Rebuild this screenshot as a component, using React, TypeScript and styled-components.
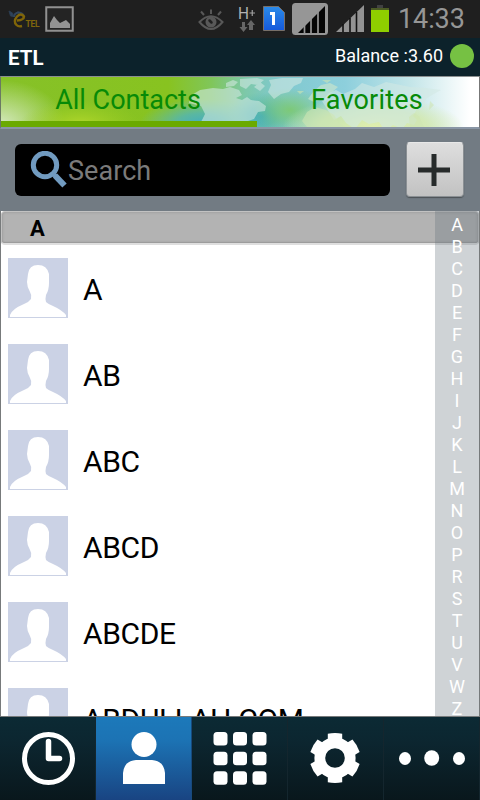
import React from "react";
import styled, { createGlobalStyle } from "styled-components";

const GlobalStyle = createGlobalStyle`
  * { box-sizing: border-box; }
  body { margin: 0; background: #000; font-family: Roboto, "Noto Sans", sans-serif; }
  svg { display: block; flex: none; }
`;

const Screen = styled.div`
  width: 480px;
  height: 800px;
  display: flex;
  flex-direction: column;
  overflow: hidden;
  background: #fff;
`;

const StatusBar = styled.header`
  flex: none;
  height: 38px;
  display: flex;
  background: #1f1f1f;
`;

const Clock = styled.time`
  margin-left: 7px;
  font-size: 27px;
  line-height: 38px;
  letter-spacing: -0.1px;
  color: #969696;
`;

const TitleBar = styled.div`
  flex: none;
  height: 38px;
  padding: 0 6px 0 8px;
  display: flex;
  align-items: center;
  justify-content: space-between;
  background: #0c222b;
  color: #fff;
`;

const Title = styled.h1`
  margin: 1px 0 0;
  font-size: 20.5px;
  line-height: 24px;
  font-weight: 700;
`;

const Balance = styled.div`
  display: flex;
  align-items: center;
  gap: 7px;
  padding-bottom: 2px;
  font-size: 18px;
  line-height: 24px;
`;

const OnlineDot = styled.span`
  width: 24px;
  height: 24px;
  border-radius: 50%;
  background: #76c143;
`;

const TabBar = styled.nav`
  flex: none;
  position: relative;
  height: 53px;
  display: flex;
  border-top: 1px solid #8b8f90;
  border-bottom: 2px solid #8996a5;
  border-left: 1px solid #6a7962;
  border-right: 1px solid #777;
`;

const TabArt = styled.svg`
  position: absolute;
  inset: 0;
`;

const Tab = styled.button<{ $active?: boolean }>`
  position: relative;
  width: ${(p) => (p.$active ? 256 : 222)}px;
  height: 50px;
  padding: 3px 2px 0 0;
  border: 0;
  border-bottom: 6px solid ${(p) => (p.$active ? "#6aaa00" : "transparent")};
  background: none;
  font: 27px/41px Roboto, sans-serif;
  letter-spacing: ${(p) => (p.$active ? 0 : 0.2)}px;
  color: #078a07;
`;

const SearchRow = styled.div`
  flex: none;
  height: 82px;
  padding: 13px 16px 0 15px;
  display: flex;
  justify-content: space-between;
  background: #727b83;
`;

const SearchBox = styled.div`
  width: 375px;
  height: 52px;
  margin-top: 2px;
  padding: 2px 0 0 15px;
  display: flex;
  align-items: center;
  border-radius: 6px;
  background: #000;
  color: #7b7b7b;
  font-size: 27px;
  letter-spacing: 0.05px;
`;

const AddButton = styled.button`
  width: 58px;
  height: 55px;
  padding: 0 2px 0 0;
  display: grid;
  place-items: center;
  border: 1px solid #8b9094;
  border-top-color: #e8e8e8;
  border-radius: 4px;
  background: linear-gradient(#dedede, #c2c2c2);
  box-shadow: 0 1px 1px #4d5357;
`;

const ListArea = styled.main`
  position: relative;
  flex: none;
  height: 506px;
  overflow: hidden;
  border: solid #777a7b;
  border-width: 0 1px 1px;
  background: #fff;
`;

const SectionHeader = styled.h2`
  margin: 0;
  height: 34px;
  padding-left: 28px;
  border: 1px solid #c2c2c2;
  border-bottom: 2px solid #dedede;
  border-radius: 4px;
  background: #b3b3b3;
  box-shadow: inset 0 0 3px #929292, inset 0 -1px 1px #a0a0a0;
  font-size: 22px;
  line-height: 33px;
  font-weight: 700;
  color: #000;
`;

const Contact = styled.div`
  height: 86px;
  padding: 13px 0 0 7px;
  display: flex;
  gap: 15px;
  font-size: 30px;
  line-height: 64px;
  letter-spacing: -0.35px;
  color: #000;
`;

const AlphaIndex = styled.aside`
  position: absolute;
  top: 0;
  right: 0;
  width: 44px;
  height: 506px;
  padding-top: 3px;
  display: flex;
  flex-direction: column;
  background: rgba(95, 108, 118, 0.3);
`;

const Letter = styled.span`
  flex: none;
  height: 22px;
  font-size: 18px;
  line-height: 22px;
  text-align: center;
  color: #fff;
`;

const BottomNav = styled.nav`
  flex: none;
  height: 83px;
  display: grid;
  grid-template-columns: repeat(5, 96px);
`;

const NavItem = styled.button<{ $active?: boolean }>`
  padding: 0;
  border: 0;
  border-right: 1px solid ${(p) => (p.$active ? "#184a7c" : "#14262e")};
  background: ${(p) =>
    p.$active
      ? "linear-gradient(#1c79ba 0%, #1c73b4 28%, #194482 100%)"
      : "linear-gradient(#0c2a34 0%, #0c2630 30%, #09171c 100%)"};
`;

const StatusIcons = () => (
  <svg width="391" height="38" viewBox="0 0 391 38">
    <path d="M9 11l3.500 2 1 3.500-3-.5z" fill="#2f435a" stroke="#2b3d51" />
    <path d="M17 12.500q5-.500 7 3.500M14 17q0-4 5-4.500" fill="none" stroke="#31455b" strokeWidth="2" />
    <path d="M17 20.500q7-.5 7-4q-3-4-7 0q-4 5-.5 8.500q2 2 5.500 1" fill="none" stroke="#806508" strokeWidth="2.400" />
    <text x="25.500" y="27" fontFamily="Roboto, sans-serif" fontSize="8.500" fontWeight="700" textLength="14" fill="#80650c">TEL</text>
    <rect x="46.250" y="7.250" width="26.500" height="23.500" fill="#242424" stroke="#919191" strokeWidth="2" />
    <path d="M50 28v-5l4-7 3 4 3 3 6-3 4 4v4z" fill="#939393" />
    <g fill="none" stroke="#585858" strokeWidth="2">
      <path d="M199.500 22q11.500-11.500 23 0q-11.500 14-23 0z" />
      <path d="M211 14V9.500M204 15l-3-3.500M218 15l3-3.500" />
    </g>
    <circle cx="211" cy="22" r="5.500" fill="#585858" />
    <path d="M209.500 20.500l2 2" stroke="#202020" strokeWidth="2.500" strokeLinecap="round" />
    <text x="238" y="19" fontFamily="Roboto, sans-serif" fontSize="17" textLength="11" lengthAdjust="spacingAndGlyphs" fill="#b2b2b2">H</text>
    <path d="M249.500 13h5.500M252.250 10v6" stroke="#a0a0a0" strokeWidth="1.200" />
    <path d="M242 22h3v5h2.500l-4 5-4-5h2.500zM249 30v-5h-2l4-5 4 5h-2v5z" fill="#666" />
    <path d="M263.500 6.500h15l6 6v18h-21z" fill="url(#sim)" stroke="#776f68" />
    <path d="M270 13.500h3.500V25" fill="none" stroke="#fff" strokeWidth="3" />
    <rect x="292" y="3" width="36" height="32" rx="3.500" fill="#969696" />
    <path d="M298 33l27-27v27z" fill="#050505" />
    <path d="M304.500 25v8M311 18v15M318 12v21" stroke="#969696" strokeWidth="1.700" />
    <path d="M336 32l28-27v27z" fill="#939393" />
    <path d="M343 24v8M350 18v14M356.500 12v20" stroke="#111" strokeWidth="1.600" />
    <path d="M377 5h6v3h-6z" fill="#414141" />
    <rect x="371" y="8" width="18" height="24" fill="#8fce00" />
    <path d="M371 8h18v2h-18z" fill="#4c5b25" />
    <defs>
      <linearGradient id="sim" x2="0" y2="1"><stop stopColor="#2b8be8" /><stop offset="1" stopColor="#1559db" /></linearGradient>
    </defs>
  </svg>
);

const WorldMap = () => (
  <TabArt width="478" height="50" viewBox="1 77 478 50" preserveAspectRatio="none">
    <defs>
      <linearGradient id="band">
        <stop stopColor="#86c128" /><stop offset=".35" stopColor="#88c320" />
        <stop offset=".44" stopColor="#80c65a" /><stop offset=".51" stopColor="#7dc8a8" />
        <stop offset=".58" stopColor="#80c9ce" /><stop offset=".72" stopColor="#8dcfdc" />
        <stop offset=".86" stopColor="#c5e6e9" /><stop offset=".98" stopColor="#fff" />
      </linearGradient>
      <radialGradient id="pale"><stop stopColor="#d4e9bd" /><stop offset="1" stopColor="#d4e9bd" stopOpacity="0" /></radialGradient>
      <radialGradient id="lime"><stop stopColor="#b0d62b" /><stop offset="1" stopColor="#9cce20" stopOpacity="0" /></radialGradient>
      <radialGradient id="sea"><stop stopColor="#45aebc" /><stop offset=".4" stopColor="#53b5b1" stopOpacity=".85" /><stop offset="1" stopColor="#63bdb1" stopOpacity="0" /></radialGradient>
      <radialGradient id="glow"><stop stopColor="#e1efad" /><stop offset=".6" stopColor="#d4e9a9" stopOpacity=".8" /><stop offset="1" stopColor="#d4e9a9" stopOpacity="0" /></radialGradient>
      <radialGradient id="leaf"><stop stopColor="#7dc978" /><stop offset="1" stopColor="#7dc978" stopOpacity="0" /></radialGradient>
    </defs>
    <rect x="1" y="77" width="478" height="50" fill="url(#band)" />
    <ellipse cx="0" cy="124" rx="65" ry="44" fill="url(#pale)" />
    <ellipse cx="80" cy="124" rx="60" ry="24" fill="url(#lime)" />
    <ellipse cx="202" cy="123" rx="62" ry="24" fill="url(#sea)" />
    <ellipse cx="262" cy="116" rx="35" ry="24" fill="url(#sea)" />
    <ellipse cx="290" cy="110" rx="38" ry="22" fill="url(#leaf)" />
    <ellipse cx="373" cy="128" rx="91" ry="32" fill="url(#glow)" />
    <g fill="#d2e9e3" fillOpacity=".58">
      <path d="M190 96l10-6 13-2 10 1 7-2 9 3 3 5-6 3 6 2 5-3 4 3 8 1 7 5-1 5-7 1-4 7-9 3-4 5h-43l4-7 3-6-4-8-12-3z" />
      <path d="M226 83l7-3 5 2-4 4-8 1zM240 79l17-1 7 2-6 5-7-1-5 5-6-3zM254 87l6-5 5 4-5 5z" />
      <path d="M269 80l13-2h21l-2 5-7 3-5 6-8 2-7 5-6-7 3-7z" />
      <path d="M308 99l5-7 8-7 9-2 8 4-8 7-4 7-6-1-6 2zM318 89l5 1-3 4z" fill="#d2e9cb" />
      <path d="M322 101l7-8 7-3 7 4 12-5 7-6 12 4 12-5 24 5 16 1 15 2-9 5-6 4-2 7-6 1-5 9 4 4-3 5-7-2-5 6-9-4-8 6-6-9-10 2-7-4-7 9-9-6-5-7-7 4z" />
      <path d="M307 112l8-5 11 3 8 5 5 8 5 4h-37l-5-6zM409 117l5-4 5 3 5 11h-14zM297 91h7l-4 3zM322 80h9l-4 3zM430 101l4 4-5 5z" fill="#cee6b4" />
    </g>
  </TabArt>
);

const SearchIcon = () => (
  <svg width="38" height="40" viewBox="0 0 38 40">
    <circle cx="15" cy="14" r="11.700" fill="none" stroke="#719bc0" strokeWidth="5" />
    <path d="M23 22.500l3 3" stroke="#719bc0" strokeWidth="4.500" />
    <path d="M25 24.500l9.500 10" stroke="#719bc0" strokeWidth="6" />
  </svg>
);

const Avatar = () => (
  <svg width="60" height="60" viewBox="0 0 60 60">
    <rect width="60" height="60" fill="#cbd2e5" />
    <path d="M2 59v-2q2-6 14-11 5-2 7-5 1-4-1-7-3-5-3-10l1-8q1-9 10-9t11 9v9q0 7-3 12-1 4 0 7 2 2 7 4 9 4 13 9v2z" fill="#fff" />
  </svg>
);

const gearTeeth = [0, 60, 120, 180, 240, 300];

const NavIcon = ({ kind }: { kind: string }) => (
  <svg width="95" height="83" viewBox="0 0 95 83" fill="#fff">
    {kind === "recent" && (
      <g fill="none" stroke="#fff">
        <circle cx="48.500" cy="41.500" r="24" strokeWidth="5" />
        <path d="M48.500 24.500v17h11" strokeWidth="5.500" strokeLinecap="round" strokeLinejoin="round" />
      </g>
    )}
    {kind === "contacts" && (
      <>
        <circle cx="48" cy="27.500" r="12.500" />
        <path d="M27 67V56q1-12 13-13h16q12 1 13 13v11z" />
      </>
    )}
    {kind === "keypad" &&
      [15, 34.7, 54.2].map((y) => [21.5, 41, 60.5].map((x) => <rect key={`${x}-${y}`} x={x} y={y} width="14" height="13.500" rx="3.500" />))}
    {kind === "settings" && (
      <g transform="translate(47 41)">
        {gearTeeth.map((angle) => (
          <path key={angle} transform={`rotate(${angle})`} d="M-7.200-17v-7.300q7.200-1.600 14.400 0v7.300z" />
        ))}
        <circle r="15.200" fill="none" stroke="#fff" strokeWidth="10.800" />
      </g>
    )}
    {kind === "more" && (
      <>
        <ellipse cx="21" cy="41.500" rx="6" ry="6.500" />
        <ellipse cx="47.700" cy="41" rx="7.500" ry="7.800" />
        <ellipse cx="75" cy="41.500" rx="6" ry="6.500" />
      </>
    )}
  </svg>
);

const contacts = ["A", "AB", "ABC", "ABCD", "ABCDE", "ABDULLAH COM"];
const letters = "ABCDEFGHIJKLMNOPRSTUVWZ".split("");
const navItems = ["recent", "contacts", "keypad", "settings", "more"];

export default function App() {
  return (
    <>
      <GlobalStyle />
      <Screen>
        <StatusBar>
          <StatusIcons />
          <Clock>14:33</Clock>
        </StatusBar>
        <TitleBar>
          <Title>ETL</Title>
          <Balance>
            Balance :3.60
            <OnlineDot />
          </Balance>
        </TitleBar>
        <TabBar>
          <WorldMap />
          <Tab $active>All Contacts</Tab>
          <Tab>Favorites</Tab>
        </TabBar>
        <SearchRow>
          <SearchBox>
            <SearchIcon />
            Search
          </SearchBox>
          <AddButton aria-label="Add contact">
            <svg width="32" height="32" viewBox="0 0 32 32">
              <path d="M16 0v32M0 16h32" stroke="#272b2b" strokeWidth="5" />
            </svg>
          </AddButton>
        </SearchRow>
        <ListArea>
          <SectionHeader>A</SectionHeader>
          {contacts.map((name) => (
            <Contact key={name}>
              <Avatar />
              {name}
            </Contact>
          ))}
          <AlphaIndex>
            {letters.map((letter) => (
              <Letter key={letter}>{letter}</Letter>
            ))}
          </AlphaIndex>
        </ListArea>
        <BottomNav>
          {navItems.map((kind) => (
            <NavItem key={kind} $active={kind === "contacts"} aria-label={kind}>
              <NavIcon kind={kind} />
            </NavItem>
          ))}
        </BottomNav>
      </Screen>
    </>
  );
}
